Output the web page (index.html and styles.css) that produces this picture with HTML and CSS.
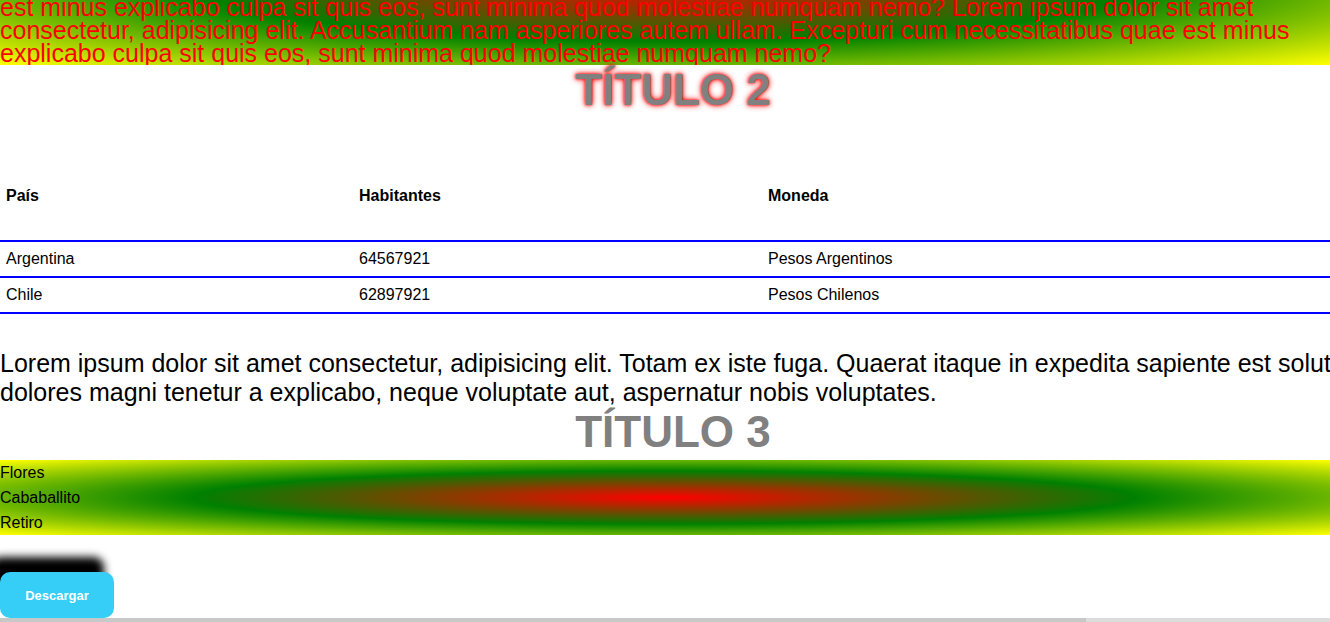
FILE: index.html
```html
<!DOCTYPE html>
<html lang="es">
<head>
<meta charset="utf-8">
<title>Página</title>
<link rel="stylesheet" href="styles.css">
</head>
<body>
<div class="intro-wrap">
  <div class="intro">
    <p class="intro-text">Lorem ipsum dolor sit amet consectetur, adipisicing elit. Accusantium nam asperiores autem ullam. Excepturi cum necessitatibus quae est minus explicabo culpa sit quis eos, sunt minima quod molestiae numquam nemo? Lorem ipsum dolor sit amet consectetur, adipisicing elit. Accusantium nam asperiores autem ullam. Excepturi cum necessitatibus quae</p>
    <p class="intro-text">est minus explicabo culpa sit quis eos, sunt minima quod molestiae numquam nemo? Lorem ipsum dolor sit amet consectetur, adipisicing elit. Accusantium nam asperiores autem ullam. Excepturi cum necessitatibus quae est minus explicabo culpa sit quis eos, sunt minima quod molestiae numquam nemo?</p>
  </div>
</div>

<h2 class="title title-glow">TÍTULO 2</h2>

<table class="data">
  <thead>
    <tr><th class="col-a">País</th><th class="col-b">Habitantes</th><th>Moneda</th></tr>
  </thead>
  <tbody>
    <tr><td>Argentina</td><td>64567921</td><td>Pesos Argentinos</td></tr>
    <tr><td>Chile</td><td>62897921</td><td>Pesos Chilenos</td></tr>
  </tbody>
</table>

<p class="body-text">Lorem ipsum dolor sit amet consectetur, adipisicing elit. Totam ex iste fuga. Quaerat itaque in expedita sapiente est soluta dolores magni tenetur a explicabo, neque voluptate aut, aspernatur nobis voluptates.</p>

<h2 class="title">TÍTULO 3</h2>

<ul class="barrios">
  <li>Flores</li>
  <li>Cababallito</li>
  <li>Retiro</li>
</ul>

<div class="actions">
  <button class="btn" type="button">Descargar</button>
</div>

<div class="hscroll"><div class="hscroll-thumb"></div></div>
</body>
</html>
```
FILE: styles.css
```css
html, body {
  margin: 0;
  padding: 0;
  overflow: hidden;
  background: #fff;
}

body {
  font-family: "Liberation Sans", Arial, sans-serif;
  font-size: 16px;
  color: #000;
}

.intro-wrap {
  height: 65px;
  overflow: hidden;
  display: flex;
  flex-direction: column;
  justify-content: flex-end;
}

.intro {
  flex: none;
  background: radial-gradient(red, green, yellow);
}

.intro-text {
  margin: 0;
  font-size: 25px;
  line-height: 23px;
  color: #ff0000;
}

.title {
  margin: 0;
  padding-left: 16px;
  text-align: center;
  font-size: 44px;
  font-weight: bold;
  color: #808080;
  line-height: 50px;
}

.title-glow {
  text-shadow: 0 0 3px red, 0 0 6px red;
}

.data {
  width: 100%;
  margin-top: 37px;
  border-collapse: collapse;
}

.data th {
  text-align: left;
  font-weight: bold;
  padding: 35px 6px;
}

.data .col-a { width: 341px; }
.data .col-b { width: 397px; }

.data td {
  padding: 8px 6px;
  line-height: 18px;
}

.data tr {
  border-bottom: 2px solid #0000ff;
}

.body-text {
  width: 1400px;
  margin: 35px 0 0;
  font-size: 25px;
  line-height: 29px;
}

.barrios {
  list-style: none;
  margin: 3px 0 0;
  padding: 0;
  background: radial-gradient(red, green, yellow);
}

.barrios li {
  line-height: 25px;
}

.actions {
  margin-top: 37px;
}

.btn {
  display: block;
  width: 114px;
  height: 46px;
  border: none;
  border-radius: 10px;
  background: #36cdf6;
  color: #fff;
  font-family: "Liberation Sans", Arial, sans-serif;
  font-size: 13px;
  font-weight: bold;
  box-shadow: -10px -15px 8px #000;
}

.hscroll {
  position: fixed;
  left: 0;
  right: 0;
  bottom: 0;
  height: 4px;
  background: #dcdcdc;
}

.hscroll-thumb {
  width: 1086px;
  height: 100%;
  background: #c8c8c8;
}
```
